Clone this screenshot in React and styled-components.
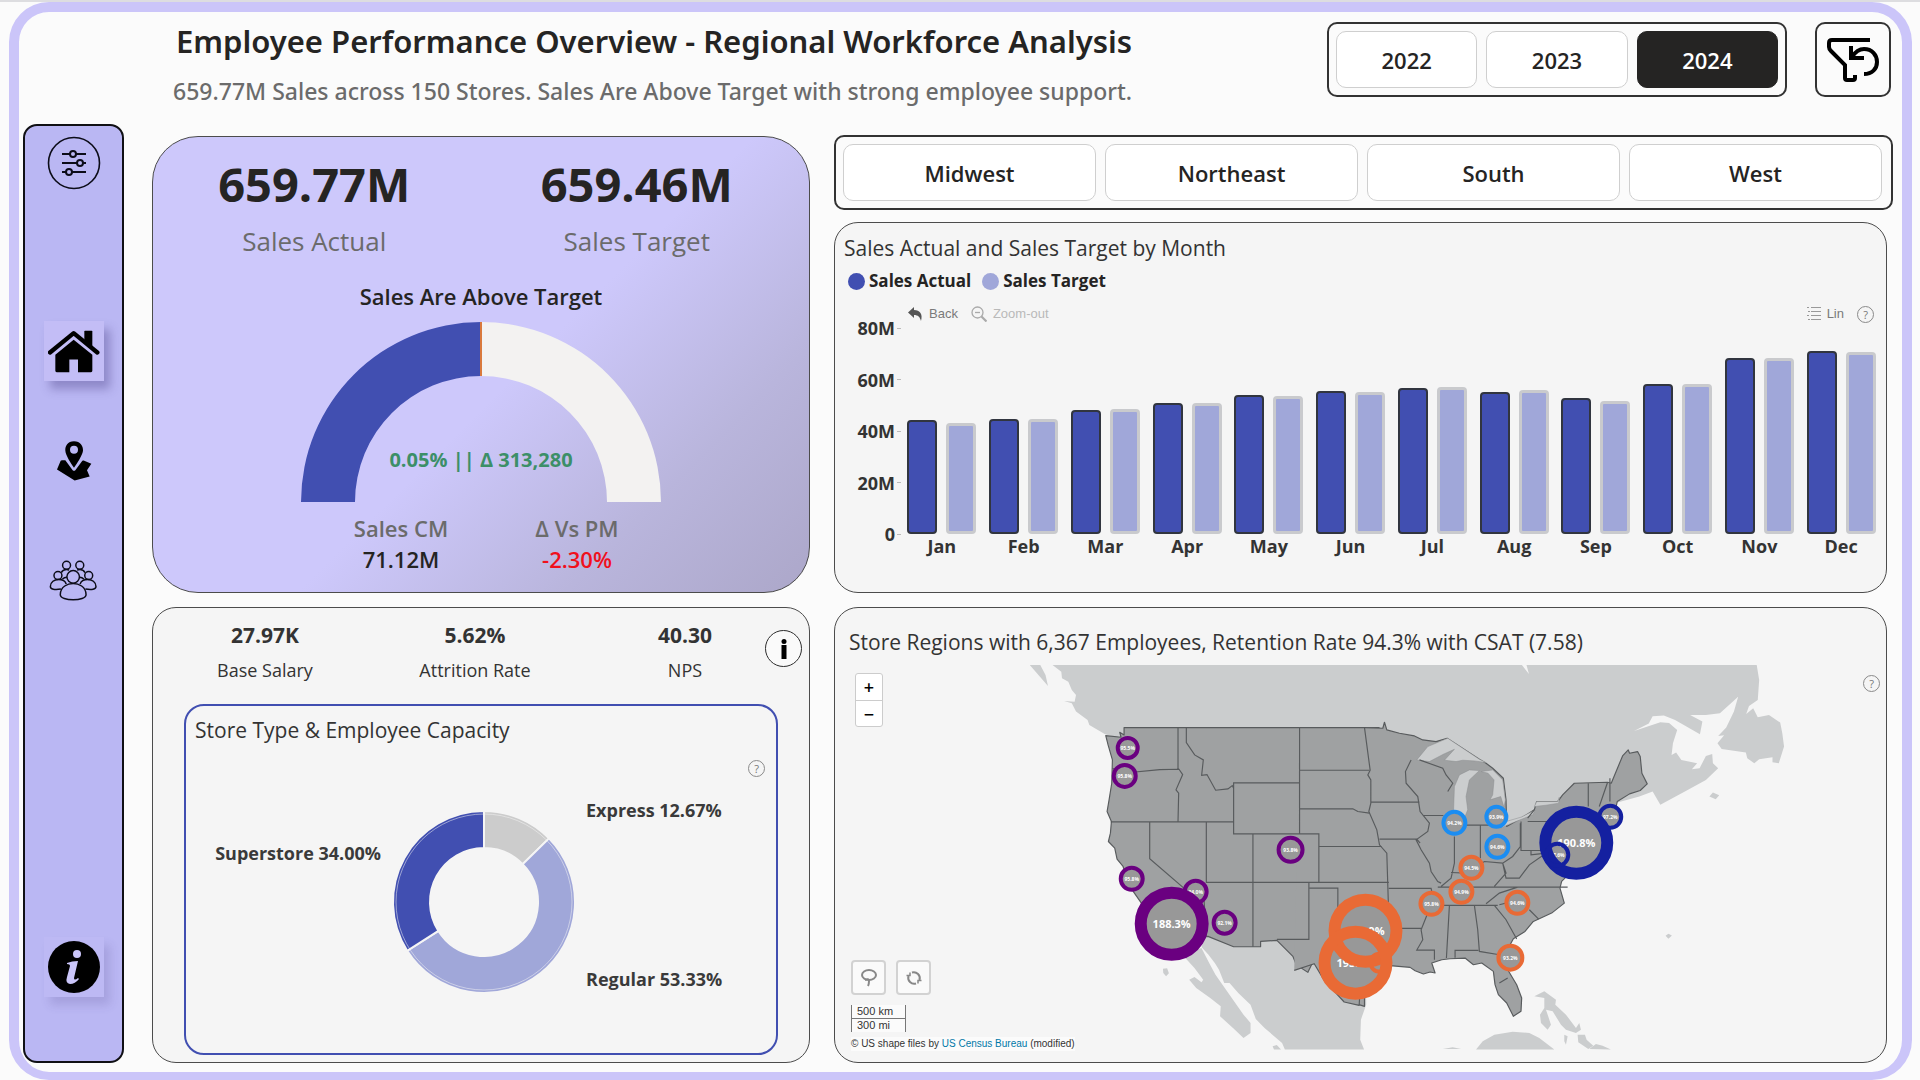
import React from "react";
import styled, { createGlobalStyle, css } from "styled-components";

const ink = "#252423";
const muted = "#6b6b6b";
const lilac = "#cbc5f9";
const royal = "#414fb1";
const pale = "#a0a7d9";

const Global = createGlobalStyle`
  *, *::before, *::after { box-sizing: border-box; }
  body {
    margin: 0;
    background: #fbfbfb;
    color: ${ink};
    font-family: "Open Sans", "Noto Sans", sans-serif;
  }
  button { font: inherit; color: inherit; cursor: pointer; }
  h1, h2, p, dl, dd, dt, ul { margin: 0; padding: 0; }
`;

const Page = styled.div`
  min-height: 100vh;
  display: flex;
  flex-direction: column;
  border-top: 2px solid #dddde0;
  padding: 0 8px 0 9px;
`;

const Frame = styled.main`
  flex: 1;
  display: flex;
  flex-direction: column;
  border: 10px solid ${lilac};
  border-bottom-width: 8px;
  border-radius: 40px;
  background: #fbfbfb;
  padding: 10px 9px 9px 4px;
`;

const Header = styled.header`
  display: flex;
  height: 102px;
  padding-left: 150px;
`;

const Heading = styled.div`
  flex: 1;
  white-space: nowrap;
  font-family: "Noto Sans", "Open Sans", sans-serif;
`;

const Title = styled.h1`
  padding-left: 3px;
  font-size: 31px;
  line-height: 38px;
  font-weight: 600;
`;

const Subtitle = styled.p`
  margin-top: 15px;
  font-size: 23px;
  line-height: 32px;
  font-weight: 500;
  color: ${muted};
`;

const Slicer = styled.div`
  display: grid;
  grid-auto-flow: column;
  grid-auto-columns: 1fr;
  gap: 9px;
  height: 75px;
  padding: 7px;
  border: 2px solid #333;
  border-radius: 10px;
  background: #fbfbfb;
`;

const YearSlicer = styled(Slicer)`
  width: 460px;
`;

const RegionSlicer = styled(Slicer)`
  padding-right: 9px;
`;

const Choice = styled.button`
  border: 1px solid #cfcfcf;
  border-radius: 10px;
  background: #fff;
  font-size: 22px;
  line-height: 30px;
  font-weight: 600;
  ${(p) =>
    p.$on &&
    css`
      background: ${ink};
      border-color: ${ink};
      color: #fff;
    `}
`;

const ResetButton = styled.button`
  display: grid;
  place-items: center;
  width: 76px;
  height: 75px;
  margin: 0 2px 0 28px;
  padding: 0;
  border: 2px solid #333;
  border-radius: 10px;
  background: #fbfbfb;
`;

const Body = styled.div`
  flex: 1;
  display: flex;
`;

const Sidebar = styled.nav`
  flex: none;
  display: flex;
  flex-direction: column;
  align-items: center;
  width: 101px;
  padding: 7px 0 64px;
  border: 2px solid #101014;
  border-radius: 14px;
  background: #bab7f3;
`;

const NavButton = styled.button`
  display: grid;
  place-items: center;
  width: 60px;
  height: 60px;
  margin-top: ${(p) => p.$gap || 0}px;
  padding: 0;
  border: 0;
  background: ${(p) => (p.$raised ? "#c3bdf6" : "transparent")};
  box-shadow: ${(p) => (p.$raised ? "6px 8px 9px rgba(60, 50, 120, 0.35)" : "none")};
`;

const NavFoot = styled(NavButton)`
  margin-top: auto;
  background: #bdb9f4;
  box-shadow: 6px 8px 9px rgba(60, 50, 120, 0.16);
`;

const Columns = styled.div`
  flex: 1;
  display: grid;
  grid-template-columns: minmax(0, 658fr) minmax(0, 1059fr);
  grid-template-rows: 458fr 456fr;
  gap: 14px 24px;
  padding: 11px 0 0 28px;
`;

const Card = styled.section`
  position: relative;
  display: flex;
  flex-direction: column;
  border: 1px solid #4c4c4c;
  border-radius: 24px;
  background: #f5f5f5;
`;

const SalesCard = styled(Card)`
  margin-top: 1px;
  padding-top: 17px;
  border-radius: 46px;
  background: linear-gradient(135deg, #cdc8fb 0%, #cdc8fb 54%, #b9b5dc 78%, #aca7c9 100%);
`;

const Kpis = styled.dl`
  display: grid;
  grid-template-columns: 1fr 1fr;
  padding-right: 11px;
  text-align: center;
`;

const KpiValue = styled.dd`
  font-size: 47px;
  line-height: 60px;
  font-weight: 700;
`;

const KpiLabel = styled.dt`
  margin-top: 9px;
  font-size: 26px;
  line-height: 36px;
  color: ${muted};
`;

const Kpi = styled.div`
  display: flex;
  flex-direction: column-reverse;
`;

const GaugeTitle = styled.h2`
  margin-top: 22px;
  text-align: center;
  font-size: 22px;
  line-height: 30px;
  font-weight: 600;
`;

const Gauge = styled.div`
  position: relative;
  align-self: center;
  width: 360px;
  height: 180px;
  margin-top: 11px;
  svg { display: block; }
`;

const GaugeValue = styled.p`
  position: absolute;
  inset: auto 0 27px;
  text-align: center;
  font-size: 20px;
  line-height: 30px;
  font-weight: 700;
  color: #3c8f68;
`;

const Months = styled.dl`
  display: grid;
  grid-template-columns: 176px 176px;
  justify-content: center;
  margin-top: 11px;
  padding-left: 16px;
  text-align: center;
  font-size: 22px;
  line-height: 30px;
  font-weight: 600;
`;

const MonthLabel = styled.dt`
  color: ${muted};
`;

const MonthValue = styled.dd`
  margin-top: 1px;
  color: ${(p) => (p.$down ? "#f0101c" : ink)};
`;

const StaffCard = styled(Card)`
  padding: 13px 31px 7px;
`;

const Stats = styled.dl`
  display: grid;
  grid-template-columns: repeat(3, 1fr);
  margin: 0 -12px 0 -24px;
  text-align: center;
  color: #333;
`;

const Stat = styled.div`
  display: flex;
  flex-direction: column-reverse;
`;

const StatValue = styled.dd`
  font-size: 21px;
  line-height: 28px;
  font-weight: 700;
`;

const StatLabel = styled.dt`
  margin-top: 9px;
  font-size: 18px;
  line-height: 24px;
`;

const InfoButton = styled.button`
  position: absolute;
  top: 22px;
  right: 7px;
  display: grid;
  place-items: center;
  width: 37px;
  height: 37px;
  padding: 0;
  border: 1px solid #2c2c2c;
  border-radius: 50%;
  background: #fafafa;
`;

const TypePanel = styled.div`
  flex: 1;
  position: relative;
  display: flex;
  flex-direction: column;
  margin-top: 22px;
  padding-top: 9px;
  border: 2px solid ${royal};
  border-radius: 20px;
  svg { display: block; }
`;

const PanelTitle = styled.h2`
  padding: 0 9px;
  font-size: 21px;
  line-height: 30px;
  font-weight: 400;
  color: #333;
  white-space: nowrap;
`;

const HelpButton = styled.button`
  display: grid;
  place-items: center;
  width: 17px;
  height: 17px;
  padding: 0;
  border: 1px solid #8a8a8a;
  border-radius: 50%;
  background: transparent;
  font-size: 11px;
  line-height: 15px;
  color: #777;
`;

const PanelHelp = styled(HelpButton)`
  position: absolute;
  top: ${(p) => p.$top}px;
  right: ${(p) => p.$right}px;
`;

const RightTop = styled.div`
  display: flex;
  flex-direction: column;
  gap: 12px;
`;

const ChartCard = styled(Card)`
  flex: 1;
  margin-right: 6px;
  padding-top: 10px;
`;

const Legend = styled.ul`
  display: flex;
  gap: 11px;
  margin-top: 6px;
  padding-left: 13px;
  list-style: none;
  font-size: 17px;
  line-height: 24px;
  font-weight: 700;
`;

const LegendItem = styled.li`
  display: flex;
  align-items: center;
  gap: 4px;
  &::before {
    content: "";
    width: 17px;
    height: 17px;
    border-radius: 50%;
    background: ${(p) => p.$color};
  }
`;

const Tools = styled.div`
  display: flex;
  align-items: center;
  gap: 13px;
  height: 16px;
  margin-top: 13px;
  padding: 0 12px 0 73px;
`;

const Tool = styled.button`
  display: flex;
  align-items: center;
  gap: 6px;
  padding: 0;
  border: 0;
  background: none;
  font-family: "Liberation Sans", Arial, sans-serif;
  font-size: 13px;
  line-height: 16px;
  color: ${(p) => (p.disabled ? "#b9b9b9" : "#7a7a7a")};
`;

const ToolSpace = styled.span`
  flex: 1;
`;

const Chart = styled.div`
  display: grid;
  grid-template-columns: 66px 1fr;
  margin-top: 6px;
  padding-right: 4px;
`;

const Axis = styled.div`
  display: flex;
  flex-direction: column;
  justify-content: space-between;
  height: 230px;
  margin-top: -12px;
  font-size: 18px;
  line-height: 24px;
  font-weight: 700;
  color: #333;
  span {
    display: flex;
    align-items: center;
    justify-content: flex-end;
    gap: 2px;
  }
  span::after {
    content: "";
    width: 4px;
    height: 1px;
    background: #bbb;
  }
`;

const Plot = styled.div`
  display: grid;
  grid-template-columns: repeat(12, 1fr);
`;

const Month = styled.div`
  text-align: center;
  font-size: 18px;
  line-height: 24px;
  font-weight: 700;
  color: #333;
`;

const Pair = styled.div`
  display: flex;
  align-items: flex-end;
  justify-content: center;
  gap: 9px;
  height: 206px;
`;

const Bar = styled.div`
  width: 30px;
  border-radius: 4px;
  background: ${(p) => (p.$target ? pale : royal)};
  border: ${(p) => (p.$target ? "3px solid #c9cacd" : "2px solid #31353f")};
`;

const MapCard = styled(Card)`
  margin-right: 6px;
  padding: 19px 6px 0 5px;
  overflow: hidden;
`;

const MapArea = styled.div`
  margin-top: 8px;
  svg { display: block; }
`;

const MapBox = styled.div`
  position: absolute;
  left: ${(p) => p.$left}px;
  bottom: ${(p) => p.$bottom}px;
`;

const ZoomBox = styled(MapBox)`
  width: 28px;
  border: 1px solid #ccc;
  border-radius: 3px;
  background: #fff;
`;

const ZoomButton = styled.button`
  display: block;
  width: 100%;
  height: 26px;
  padding: 0;
  border: 0;
  background: none;
  font-size: 18px;
  line-height: 26px;
  font-weight: 600;
  color: #000;
  & + & { border-top: 1px solid #ccc; }
`;

const MapTools = styled(MapBox)`
  display: flex;
  gap: 10px;
`;

const MapTool = styled.button`
  display: grid;
  place-items: center;
  width: 35px;
  height: 35px;
  padding: 0;
  border: 2px solid #d2d2d2;
  border-radius: 4px;
  background: #fafafa;
`;

const Scale = styled(MapBox)`
  width: 55px;
  font-family: "Liberation Sans", Arial, sans-serif;
  font-size: 11px;
  line-height: 13px;
  color: #333;
  div {
    padding-left: 5px;
    border: solid #777;
    border-width: 0 1px;
    background: #fbfbfb;
  }
  div + div { border-top-width: 1px; }
`;

const Credit = styled(MapBox)`
  background: #fbfbfb;
  font-family: "Liberation Sans", Arial, sans-serif;
  font-size: 10px;
  line-height: 14px;
  color: #333;
  white-space: nowrap;
  a { color: #0078a8; text-decoration: none; }
`;

const months = [
  ["Jan", 44.3, 43.1], ["Feb", 44.7, 44.7], ["Mar", 48.1, 48.5], ["Apr", 50.9, 50.9],
  ["May", 54, 53.6], ["Jun", 55.5, 55.1], ["Jul", 56.7, 57.1], ["Aug", 55.2, 55.9],
  ["Sep", 52.8, 51.8], ["Oct", 58.1, 58.3], ["Nov", 68.5, 68.4], ["Dec", 71.1, 70.7],
];

const purple = "#6a0080";
const orange = "#e96a35";
const sky = "#1b8df2";
const navy = "#1420a0";

const stores = [
  [1128, 748, 12, purple, "95.5%"], [1125, 776, 13, purple, "95.8%"],
  [1132, 879, 13, purple, "95.8%"], [1291, 850, 14, purple, "93.8%"],
  [1196, 892, 13, purple, "94.0%"], [1225, 923, 13, purple, "92.1%"],
  [1455, 823, 13, sky, "94.2%"], [1497, 817, 12, sky, "93.9%"], [1498, 847, 13, sky, "94.6%"],
  [1472, 868, 13, orange, "94.5%"], [1462, 892, 13, orange, "94.9%"],
  [1432, 904, 13, orange, "95.8%"], [1518, 903, 13, orange, "94.6%"],
  [1511, 958, 14, orange, "93.2%"], [1380, 963, 11, orange, ""],
  [1611, 817, 13, navy, "97.2%"],
  [1172, 924, 37, purple, "188.3%"], [1366, 931, 37, orange, "189.9%"],
  [1356, 963, 37, orange, "193.2%"], [1577, 843, 37, navy, "190.8%"],
  [1558, 855, 13, navy, "97.6%"],
];

const ResetIcon = () => (
  <svg width="52" height="44" viewBox="0 0 52 44" fill="none" stroke="#000" strokeWidth="4" aria-hidden="true">
    <path d="M43 2H5Q2 2 2 5v4q0 2 2 4l14 14v13q0 2 2 2h6q2 0 2-2v-3" />
    <path d="M24 8v12h13" />
    <path d="M25 19q5-8 12-8c8 0 13 6 13 13s-5 12-13 12" />
  </svg>
);

const SlidersIcon = () => (
  <svg width="54" height="54" viewBox="0 0 54 54" fill="none" stroke="#0c0c18" strokeWidth="2" aria-hidden="true">
    <circle cx="27" cy="27" r="25.5" strokeWidth="1.6" />
    <path d="M15 18h8m6 0h10M15 27h15m6 0h3M15 36h4m6 0h14" />
    <circle cx="26" cy="18" r="3" /><circle cx="33" cy="27" r="3" /><circle cx="22" cy="36" r="3" />
  </svg>
);

const HomeIcon = () => (
  <svg width="52" height="43" viewBox="84 90 156 128" aria-hidden="true">
    <path d="M90 157L161 99l71 58" fill="none" stroke="#000" strokeWidth="13" strokeLinecap="round" strokeLinejoin="round" />
    <path d="M193 94q0-2 2-2h20q2 0 2 2v50l-24-20z" />
    <path d="M161 119l56 45v48q0 4-4 4h-39v-38h-26v38h-38q-4 0-4-4v-48z" />
  </svg>
);

const PinIcon = () => (
  <svg width="36" height="41" viewBox="105 420 108 122" aria-hidden="true">
    <path fillRule="evenodd" d="M159 423c-19 0-27 14-26 29 1 14 17 38 26 51 9-13 25-37 27-51 1-15-8-29-27-29zm0 14a12 12 0 1 1 0 24 12 12 0 0 1 0-24z" />
    <path d="M108 508l11-26q1-2 4-2h10l22 30q4 4 8 0l21-28q2-2 4-1l23 10-13 19 8 19-45 12z" />
  </svg>
);

const PeopleIcon = () => (
  <svg width="49" height="41" viewBox="88 780 148 124" fill="none" stroke="#0c0c18" strokeWidth="4.5" aria-hidden="true">
    <circle cx="141" cy="796" r="12" /><circle cx="181" cy="796" r="12" />
    <circle cx="115" cy="827" r="12" /><circle cx="208" cy="827" r="12" />
    <circle cx="161" cy="831" r="19" />
    <path d="M122 885c0-25 23-34 39-34s39 9 39 34c0 20-78 20-78 0z" />
    <path d="M124 868c-19 3-32 1-32-8 0-14 13-21 24-21 13 0 22 6 24 14M198 868c19 3 32 1 32-8 0-14-13-21-24-21-13 0-22 6-24 14" />
    <path d="M125 818c4-8 14-11 24-8M197 818c-4-8-14-11-24-8M128 838c5-5 9-6 14-6M194 838c-5-5-9-6-14-6" />
  </svg>
);

const InfoIcon = () => (
  <svg width="52" height="52" viewBox="0 0 52 52" aria-hidden="true">
    <circle cx="26" cy="26" r="26" />
    <circle cx="29" cy="13" r="4" fill="#cbc6fa" />
    <path d="M19 22q5-2 11-2l-4 17q0 3 4 0l1 1q-4 5-9 5-5-1-3-7l3-11q0-2-3-2z" fill="#cbc6fa" />
  </svg>
);

const UsMap = () => (
  <svg width="100%" viewBox="840 665 1041 386" role="img" aria-label="Store map">
    <g fill="#cbcdce">
      <g transform="translate(830 600) scale(.35077 .33333)">
        <path d="M570 195h30l15 30 7 33zM635 195l25 20 2 20 18 10 10 25 12 15-4 20-30-2 22 7 12 25 33 25 5 15 45 28 55 17h740V195z" />
        <path d="M1060 1042l15-42h225l230 100v115l-15 45-2 60 11 30h-226l-8-20-50-45-25-27-15-43-35-35-25-30h-15l-15-40-12-20-18-25z" />
        <path d="M1010 1070l35-20 15-5 22 45 18 35 30 45 20 30 30 45 20 25v30l-20 15-30-30-37-35 2-30-30-25-40-30-20-25 15-8 20 16 5-8-25-35z" />
        <path d="M950 1107l12-1 5 15-8 9-8-10zM1263 1340l12-4 12 14h-20z" />
      </g>
      <g transform="translate(1370 600) scale(.35077 .33333)">
        <path d="M-20 195H435l20 27-7-27H1105l7 45-4 60-25 18-8 24 20-17 13 27 32-7 32 23 6 32 5 40-15 50-18-3v-15l-38 6-14 12-20-15-4-17-69-11-12-17 19-24-17 2 23-25 22-48 12-45-52 50-40 5h-45l35 20-7 38-71-43-32-13-32 2-11 22-42 22 75-26 25 2 23 21-12 40-4 35 13-7 15 22 45 10-15 18 22-3 18-37 18-6 2 28 15 15-35 35-60 35-70 40-22-40-38 15-70 20-200 30-60 20-50 20-190-40-220-40z" />
        <path d="M970 590l10-12 18 8-10 12zM845 1008l8-6 10 5-10 10z" />
      </g>
      <g transform="translate(1300 700) scale(.33333)">
        <path d="M705 890l30-15 35 25-2 15 32 30 30 40 10-15 5 20-15 10-30-10-15-15-25-40-20-5 15 45-10 15-20-20-3-25 13-20v-30zM835 1005h22l5 15 20 18-15 10-30-20zM795 1005l10 5-5 25-5-10zM870 1048l20-15 20 5 25 12zM530 1050l20-25 35-20 55-9 50 4 30 15 45 35zM430 1048l30-5 25 5z" />
      </g>
    </g>
    <g fill="#9fa1a2" stroke="#585b5d" strokeWidth="3.5" strokeLinejoin="round">
      <path
        transform="translate(1080 700) scale(.33333)"
        d="M900 83H133v22l-13-8 4 15-46-5 7 28 13 45-2 70-8 50-6 35 13 30-3 35-6 25 19 20 7 33 18 22 20 60 35 50 25 70 90 40 85-10 77 31h81v-16l49-3 48 48 10 25 35 23 12-25 18-5 25 20 60 95 55 17V830"
      />
      <path
        transform="translate(1300 700) scale(.33333)"
        d="M0 83h195l55 2 5-18 7 23 38 10 45 8 25 12 40 5 33-10 97 63 20 12 20 15 32 30 8 65 2 80 43-25 40-25 7-25h63l15-20 35-35 100-3 11 3 34-82 17-18 4 10 24-5 8 15 5 50 16 32-21 20-32 10-37 23-17 75-50 15-50 100-50 50-5 20 13 45-38 30-55 25-25 30-35 22-15 28-5 60 30 50 15 40-2 40-23 15-20-40-25-25-10-30-5-40-35-25-25 5-25-20-45 2-25 3-30 10 5 15 5 15-15-3-20 6-25-10-15-10-60-5-35 17-55 50-3 52-45-10-60-65-30-50-60 20"
      />
    </g>
    <g fill="#cbcdce" stroke="#8b8e90" strokeWidth="1.5" transform="translate(1300 700) scale(.33333)">
      <path d="M352 180l33-40 60-25 95 63 20 10-35-5-35-2-20 4-35-4 30-33-33 15-42 22z" />
      <path d="M462 345l3-85 15-35 30-15 30 2-30 28-10 50 5 40-10 25z" />
      <path d="M545 215l35-5 30 30 8 60-4 22-10-32-32 10 8-15 4-45-18-20z" />
      <path d="M605 385l20-10 75-30 8-15-43 22-45 13zM705 320l7-15h63l5-13-2 18-38 6z" />
    </g>
    <g fill="none" stroke="#585b5d" strokeWidth="3.5">
      <path
        transform="translate(1080 700) scale(.33333)"
        d="M295 83v125M98 205l30 15 112-11 58-1 11 16-20 46 8 10-2 85M320 83v45l25 37 26 15-5 46 16-2 26 47 37-4 13-10 4 8V249h198M660 83v319M462 249v153h256v146M93 366h369M210 366v111l120 103M380 366v182h548M370 548l10 162M520 402v339M688 550v169h-96M690 565h85v95M660 211h210M660 327h160l15 8 35 5M718 440h188"
      />
      <path
        transform="translate(1300 700) scale(.33333)"
        d="M195 83l17 128-7 14 9 15v70l-6 25 24 55 8 45 22 25 6 195M214 307h146M240 418h112l10 12M268 566h127l5 24M300 686h67M335 180l-17 35 2 35 35 40 7 45 28 35-5 25-35 25 15 30 25 40 5 25 20 30 10 5M372 347h60M360 180l70 25 10 20 20 25-15 25M465 410v80l-10 45-30 25M500 376h100M543 376v99M663 370v70l-23 30-30 20-55-5-55 35-45-2M665 365v87h75M685 365h60M705 330l-20 25M610 490l10 30-35 40M610 490l10 45h40l30-40 50-35-45 5v-12M415 562h390M385 617h210M560 612l40-32 55-18M400 590l-15 50-20 50 5 30-18 31h53v29M450 617l-9 158M525 617l10 73 5 65 60 10M467 774v-22h70M585 617l35 43 32 58M600 615l40-10M690 630l28 28M867 250v70M925 247l-25 73M932 235v70M600 850l25-15"
      />
    </g>
    <g fill="#989898">
      {stores.map(([x, y, r], i) => <circle key={i} cx={x} cy={y} r={r - 1} />)}
    </g>
    <g fill="#fff" fontWeight="700" textAnchor="middle">
      {stores.map(([x, y, r, , label], i) => (
        <text key={i} x={x} y={r > 20 ? y + 4 : y + 2} fontSize={r > 20 ? 11 : 5}>{label}</text>
      ))}
    </g>
    <g fill="none">
      {stores.map(([x, y, r, color], i) => (
        <circle key={i} cx={x} cy={y} r={r > 20 ? r - 6 : r - 2} stroke={color} strokeWidth={r > 20 ? 12 : 4} />
      ))}
    </g>
  </svg>
);

const slice = (from, to) => {
  const pt = (t, r) => `${r * Math.sin(t * 2 * Math.PI)} ${-r * Math.cos(t * 2 * Math.PI)}`;
  const big = to - from > 0.5 ? 1 : 0;
  return `M${pt(from, 91)}A91 91 0 ${big} 1 ${pt(to, 91)}L${pt(to, 54)}A54 54 0 ${big} 0 ${pt(from, 54)}Z`;
};

const Donut = () => (
  <svg width="100%" viewBox="186 745 590 300" role="img" aria-label="Store types">
    <g transform="translate(484 902)" stroke="#f5f5f5" strokeWidth="2">
      <path d={slice(0, 0.1267)} fill="#ccc" />
      <path d={slice(0.1267, 0.66)} fill={pale} />
      <path d={slice(0.66, 1)} fill={royal} />
      <circle r="88" fill="none" strokeWidth="1" strokeOpacity=".5" />
    </g>
    <g fontSize="18" fontWeight="700" fill="#3a3a3a">
      <text x="586" y="817">Express 12.67%</text>
      <text x="586" y="986">Regular 53.33%</text>
      <text x="381" y="860" textAnchor="end">Superstore 34.00%</text>
    </g>
  </svg>
);

export default function App() {
  return (
    <Page>
      <Global />
      <Frame>
        <Header>
          <Heading>
            <Title>Employee Performance Overview - Regional Workforce Analysis</Title>
            <Subtitle>659.77M Sales across 150 Stores. Sales Are Above Target with strong employee support.</Subtitle>
          </Heading>
          <YearSlicer>
            <Choice>2022</Choice>
            <Choice>2023</Choice>
            <Choice $on aria-pressed="true">2024</Choice>
          </YearSlicer>
          <ResetButton aria-label="Reset filters"><ResetIcon /></ResetButton>
        </Header>
        <Body>
          <Sidebar>
            <NavButton aria-label="Filters"><SlidersIcon /></NavButton>
            <NavButton aria-label="Home" $raised $gap={128}><HomeIcon /></NavButton>
            <NavButton aria-label="Stores" $gap={49}><PinIcon /></NavButton>
            <NavButton aria-label="Employees" $gap={60}><PeopleIcon /></NavButton>
            <NavFoot aria-label="About"><InfoIcon /></NavFoot>
          </Sidebar>
          <Columns>
            <SalesCard>
              <Kpis>
                <Kpi><KpiLabel>Sales Actual</KpiLabel><KpiValue>659.77M</KpiValue></Kpi>
                <Kpi><KpiLabel>Sales Target</KpiLabel><KpiValue>659.46M</KpiValue></Kpi>
              </Kpis>
              <GaugeTitle>Sales Are Above Target</GaugeTitle>
              <Gauge>
                <svg width="360" height="180" viewBox="0 0 360 180" aria-hidden="true">
                  <path d="M0 180A180 180 0 0 1 180 0V54A126 126 0 0 0 54 180Z" fill={royal} />
                  <path d="M180 0A180 180 0 0 1 360 180H306A126 126 0 0 0 180 54Z" fill="#f3f2f1" />
                  <path d="M180 0V54" stroke="#d9793d" strokeWidth="2" />
                </svg>
                <GaugeValue>0.05% || Δ 313,280</GaugeValue>
              </Gauge>
              <Months>
                <div><MonthLabel>Sales CM</MonthLabel><MonthValue>71.12M</MonthValue></div>
                <div><MonthLabel>Δ Vs PM</MonthLabel><MonthValue $down>-2.30%</MonthValue></div>
              </Months>
            </SalesCard>
            <RightTop>
              <RegionSlicer>
                <Choice>Midwest</Choice>
                <Choice>Northeast</Choice>
                <Choice>South</Choice>
                <Choice>West</Choice>
              </RegionSlicer>
              <ChartCard>
                <PanelTitle>Sales Actual and Sales Target by Month</PanelTitle>
                <Legend>
                  <LegendItem $color={royal}>Sales Actual</LegendItem>
                  <LegendItem $color={pale}>Sales Target</LegendItem>
                </Legend>
                <Tools>
                  <Tool>
                    <svg width="15" height="14" viewBox="0 0 15 14" fill="#555" aria-hidden="true">
                      <path d="M6 0v3c6 0 9 4 7 11-1-4-3-6-7-6v3L0 5.500z" />
                    </svg>
                    Back
                  </Tool>
                  <Tool disabled>
                    <svg width="16" height="16" viewBox="0 0 16 16" fill="none" stroke="#aaa" strokeWidth="1.300" aria-hidden="true">
                      <circle cx="6.500" cy="6.500" r="5.500" /><path d="M4 6.500h5" /><path d="M10.500 10.500l5 5" strokeWidth="2.200" />
                    </svg>
                    Zoom-out
                  </Tool>
                  <ToolSpace />
                  <Tool>
                    <svg width="14" height="14" viewBox="0 0 14 14" stroke="#999" aria-hidden="true">
                      <path d="M0 .5h2m2 0h10M1 4.500h2m1 0h10M0 8.500h2m2 0h10M1 12.500h2m1 0h10" />
                    </svg>
                    Lin
                  </Tool>
                  <HelpButton>?</HelpButton>
                </Tools>
                <Chart>
                  <Axis>
                    {["80M", "60M", "40M", "20M", "0"].map((t) => <span key={t}>{t}</span>)}
                  </Axis>
                  <Plot>
                    {months.map(([name, actual, target]) => (
                      <Month key={name}>
                        <Pair>
                          <Bar style={{ height: `${actual / 0.8}%` }} />
                          <Bar $target style={{ height: `${target / 0.8}%` }} />
                        </Pair>
                        {name}
                      </Month>
                    ))}
                  </Plot>
                </Chart>
              </ChartCard>
            </RightTop>
            <StaffCard>
              <Stats>
                <Stat><StatLabel>Base Salary</StatLabel><StatValue>27.97K</StatValue></Stat>
                <Stat><StatLabel>Attrition Rate</StatLabel><StatValue>5.62%</StatValue></Stat>
                <Stat><StatLabel>NPS</StatLabel><StatValue>40.30</StatValue></Stat>
              </Stats>
              <InfoButton aria-label="More about staffing">
                <svg width="6" height="20" viewBox="0 0 6 20" aria-hidden="true">
                  <circle cx="3" cy="2.500" r="2.500" /><path d="M.5 6h5v14h-5z" />
                </svg>
              </InfoButton>
              <TypePanel>
                <PanelTitle>Store Type &amp; Employee Capacity</PanelTitle>
                <PanelHelp $top={54} $right={11}>?</PanelHelp>
                <Donut />
              </TypePanel>
            </StaffCard>
            <MapCard>
              <PanelTitle>Store Regions with 6,367 Employees, Retention Rate 94.3% with CSAT (7.58)</PanelTitle>
              <MapArea><UsMap /></MapArea>
              <PanelHelp $top={67} $right={6}>?</PanelHelp>
              <ZoomBox $left={20} $bottom={335}>
                <ZoomButton aria-label="Zoom in">+</ZoomButton>
                <ZoomButton aria-label="Zoom out">−</ZoomButton>
              </ZoomBox>
              <MapTools $left={16} $bottom={67}>
                <MapTool aria-label="Lasso select">
                  <svg width="18" height="20" viewBox="0 0 18 20" fill="none" stroke="#888" strokeWidth="2" aria-hidden="true">
                    <ellipse cx="9" cy="7" rx="7" ry="5" /><path d="M5 12q4-2 4 1t-1 5" />
                  </svg>
                </MapTool>
                <MapTool aria-label="Reset map">
                  <svg width="16" height="16" viewBox="0 0 16 16" fill="none" stroke="#888" strokeWidth="2" aria-hidden="true">
                    <path d="M6 2.500a6 6 0 0 1 7.500 7.500M10 13.500a6 6 0 0 1-7.500-7.500" />
                    <path d="M15.500 10.500H12v3M.5 5.500H4v-3" strokeWidth="1.500" />
                  </svg>
                </MapTool>
              </MapTools>
              <Scale $left={16} $bottom={30}>
                <div>500 km</div>
                <div>300 mi</div>
              </Scale>
              <Credit $left={16} $bottom={11}>
                © US shape files by <a href="#census">US Census Bureau</a> (modified)
              </Credit>
            </MapCard>
          </Columns>
        </Body>
      </Frame>
    </Page>
  );
}
